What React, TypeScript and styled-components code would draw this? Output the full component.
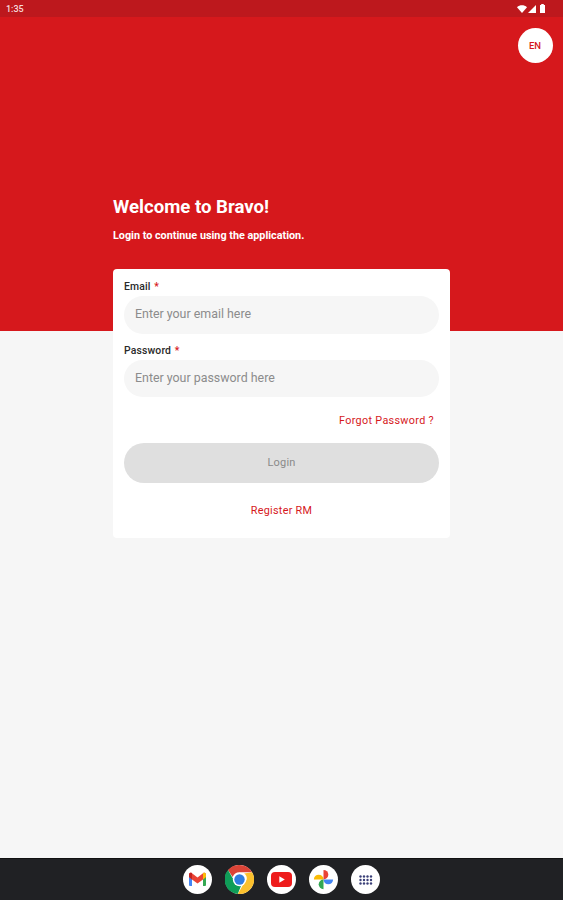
import React from "react";
import styled, { createGlobalStyle } from "styled-components";

const GlobalStyle = createGlobalStyle`
	html, body {
		margin: 0;
		padding: 0;
		height: 100%;
		background: #f6f6f6;
	}
	#root {
		height: 100%;
	}
	* {
		box-sizing: border-box;
	}
`;

const Screen = styled.div`
	display: flex;
	flex-direction: column;
	width: 563px;
	height: 900px;
	overflow: hidden;
	background: #f6f6f6;
	font-family: Roboto, "Liberation Sans", sans-serif;
`;

const StatusBar = styled.div`
	display: flex;
	align-items: center;
	justify-content: space-between;
	height: 17px;
	padding: 0 17px 0 6px;
	background: #bd181d;
	color: #f6dcdc;
	font-size: 9px;
	font-weight: 500;
`;

const StatusIcons = styled.div`
	display: flex;
	align-items: center;
	gap: 1px;
`;

const Hero = styled.div`
	display: flex;
	flex-direction: column;
	height: 314px;
	padding: 11px 10.5px 0 113px;
	background: #d6181c;
	color: #fff;
`;

const LangRow = styled.div`
	display: flex;
	justify-content: flex-end;
	height: 35px;
	margin-bottom: 132px;
`;

const LangButton = styled.button`
	width: 35px;
	height: 35px;
	padding: 0;
	border: none;
	border-radius: 50%;
	background: #fff;
	color: #d6181c;
	font-family: inherit;
	font-size: 9.5px;
	font-weight: 500;
`;

const Title = styled.h1`
	margin: 0;
	font-size: 18.6px;
	line-height: 24px;
	font-weight: 700;
`;

const Subtitle = styled.p`
	margin: 10px 0 0;
	font-size: 10.8px;
	line-height: 14px;
	font-weight: 700;
`;

const Body = styled.div`
	flex: 1;
	display: flex;
	justify-content: center;
`;

const Card = styled.form`
	display: flex;
	flex-direction: column;
	width: 337px;
	height: 269px;
	margin: -62px 0 0 0;
	padding: 11px 11px 0;
	border-radius: 4px;
	background: #fff;
`;

const Field = styled.label`
	display: flex;
	flex-direction: column;
	margin-bottom: 10px;
`;

const Label = styled.span`
	height: 16px;
	padding-top: 1px;
	color: #2a2a2a;
	font-size: 10.4px;
	line-height: 12px;
	font-weight: 500;
	letter-spacing: 0.15px;
`;

const Required = styled.span`
	margin-left: 1px;
	color: #d6181c;
`;

const Input = styled.input`
	width: 100%;
	height: 37.5px;
	padding: 0 11px 2px;
	border: none;
	border-radius: 19px;
	background: #f6f6f6;
	font-family: inherit;
	font-size: 12.4px;
	outline: none;
	&::placeholder {
		color: #8c8c8c;
		opacity: 1;
	}
`;

const ForgotLink = styled.a`
	align-self: flex-end;
	margin: 7px 5px 15px 0;
	color: #d6181c;
	font-size: 10.8px;
	line-height: 14px;
	letter-spacing: 0.32px;
`;

const LoginButton = styled.button`
	width: 100%;
	height: 39.5px;
	padding: 0;
	border: none;
	border-radius: 20px;
	background: #dfdfdf;
	color: #8a8a8a;
	font-family: inherit;
	font-size: 11px;
	font-weight: 400;
	letter-spacing: 0.2px;
`;

const RegisterLink = styled.a`
	align-self: center;
	margin-top: 21px;
	color: #d6181c;
	font-size: 10.8px;
	line-height: 14px;
	letter-spacing: 0.28px;
`;

const Dock = styled.div`
	display: flex;
	align-items: center;
	justify-content: center;
	gap: 13px;
	height: 42px;
	background: #202124;
	border-top: 1px solid #111;
`;

const DockIcon = styled.div<{ $bare?: boolean }>`
	display: flex;
	align-items: center;
	justify-content: center;
	width: 29px;
	height: 29px;
	border-radius: 50%;
	background: ${(props) => (props.$bare ? "transparent" : "#fff")};
`;

const Wifi = () => (
	<svg width="10" height="8" viewBox="0 0 10 8">
		<path d="M0 2.2C2.8-.4 7.2-.4 10 2.2L5 8z" fill="#fff" />
	</svg>
);

const Signal = () => (
	<svg width="8" height="8" viewBox="0 0 8 8">
		<path d="M8 0v8H0z" fill="#fff" />
	</svg>
);

const Battery = () => (
	<svg width="7" height="9" viewBox="0 0 7 9" style={{ marginLeft: 2 }}>
		<path d="M2.2 0h2.6v1h1.2v8H1V1h1.2z" fill="#fff" />
	</svg>
);

const Gmail = () => (
	<svg width="19" height="15" viewBox="0 0 19 15">
		<path d="M1 14V4l3 2.4V14H2a1 1 0 0 1-1-1z" fill="#4285f4" />
		<path d="M15 14V6.4L18 4v9a1 1 0 0 1-1 1z" fill="#34a853" />
		<path d="M1 5V2.6C1 1 2.8.3 4 1.2L9.5 5.4 15 1.2C16.2.3 18 1 18 2.6V5l-3 2.4-5.5 4.2L4 7.4z" fill="#ea4335" />
		<path d="M15 1.2C16.2.3 18 1 18 2.6V5l-3 2.4z" fill="#fbbc04" />
		<path d="M1 5V2.6C1 1 2.8.3 4 1.2V7.4z" fill="#c5221f" />
	</svg>
);

const Chrome = () => (
	<svg width="29" height="29" viewBox="0 0 48 48">
		<circle cx="24" cy="24" r="24" fill="#fff" />
		<path d="M24 0a24 24 0 0 1 20.8 12H24a12 12 0 0 0-11.3 8L5 8.4A24 24 0 0 1 24 0z" fill="#db4437" />
		<path d="M5 8.4l10.6 18.4A9 9 0 0 0 27 33l-5.8 14.8A24 24 0 0 1 5 8.4z" fill="#0f9d58" />
		<path d="M44.8 12A24 24 0 0 1 21.2 47.8L31.8 29.5A9 9 0 0 0 31.5 14z" fill="#fbc02d" />
		<circle cx="24" cy="24" r="11" fill="#fff" />
		<circle cx="24" cy="24" r="8.6" fill="#2f7de1" />
	</svg>
);

const Youtube = () => (
	<svg width="21" height="15" viewBox="0 0 21 15">
		<rect x="0" y="0" width="21" height="15" rx="4" fill="#ee1c1c" />
		<path d="M8.3 4.3v6.4l5.5-3.2z" fill="#fff" />
	</svg>
);

const Photos = () => (
	<svg width="21" height="21" viewBox="0 0 24 24">
		<path d="M1 12A5.5 5.5 0 0 1 12 12z" fill="#fbbc04" />
		<path d="M12 1A5.5 5.5 0 0 1 12 12z" fill="#ea4335" />
		<path d="M23 12A5.5 5.5 0 0 1 12 12z" fill="#4285f4" />
		<path d="M12 23A5.5 5.5 0 0 1 12 12z" fill="#34a853" />
	</svg>
);

const AppGrid = () => (
	<svg width="14" height="10" viewBox="0 0 14 10" fill="#3a3f78">
		{[1.5, 5, 8.5, 12].map((x) =>
			[1.5, 5, 8.5].map((y) => <circle key={`${x}-${y}`} cx={x} cy={y} r="1.2" />)
		)}
	</svg>
);

export default function App() {
	return (
		<>
			<GlobalStyle />
			<Screen>
				<StatusBar>
					<span>1:35</span>
					<StatusIcons>
						<Wifi />
						<Signal />
						<Battery />
					</StatusIcons>
				</StatusBar>
				<Hero>
					<LangRow>
						<LangButton type="button">EN</LangButton>
					</LangRow>
					<Title>Welcome to Bravo!</Title>
					<Subtitle>Login to continue using the application.</Subtitle>
				</Hero>
				<Body>
					<Card>
						<Field>
							<Label>
								Email <Required>*</Required>
							</Label>
							<Input placeholder="Enter your email here" />
						</Field>
						<Field>
							<Label>
								Password <Required>*</Required>
							</Label>
							<Input placeholder="Enter your password here" />
						</Field>
						<ForgotLink>Forgot Password ?</ForgotLink>
						<LoginButton type="button">Login</LoginButton>
						<RegisterLink>Register RM</RegisterLink>
					</Card>
				</Body>
				<Dock>
					<DockIcon>
						<Gmail />
					</DockIcon>
					<DockIcon $bare>
						<Chrome />
					</DockIcon>
					<DockIcon>
						<Youtube />
					</DockIcon>
					<DockIcon>
						<Photos />
					</DockIcon>
					<DockIcon>
						<AppGrid />
					</DockIcon>
				</Dock>
			</Screen>
		</>
	);
}
